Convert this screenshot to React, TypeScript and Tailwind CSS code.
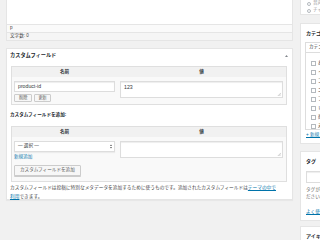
function ResizeHandle() {
  return (
    <svg className="absolute right-[1px] bottom-[1px]" width="4" height="4" viewBox="0 0 4 4">
      <path d="M0.8 4L4 0.8M2.4 4L4 2.4" stroke="#9a9a9a" strokeWidth="0.5" />
    </svg>
  );
}

function Textarea({ value }: { value?: string }) {
  return (
    <div className="relative h-[17px] border border-[#ddd] bg-white shadow-[inset_0_1px_1px_rgba(0,0,0,0.07)] pl-[3px] pt-[3px] text-[5.2px] text-[#32373c]">
      {value}
      <ResizeHandle />
    </div>
  );
}

function Checkbox() {
  return <span className="block w-[5px] h-[5px] shrink-0 border border-[#b4b9be] bg-white" />;
}

function SideBox({ title, className, children }: { title: string; className?: string; children?: React.ReactNode }) {
  return (
    <div className={`bg-white border border-[#e5e5e5] ${className ?? ""}`}>
      <div className="h-[18px] flex items-center pl-[5px] font-bold text-[5px] text-[#23282d] whitespace-nowrap">
        {title}
      </div>
      {children}
    </div>
  );
}

export default function App() {
  return (
    <div className="w-[320px] h-[240px] overflow-hidden bg-[#f1f1f1] flex pl-[6px] font-['Liberation_Sans','Noto_Sans_CJK_JP',sans-serif] text-[4.6px] text-[#444] leading-none">
      {/* main column */}
      <main className="w-[287px] shrink-0 flex flex-col">
        <div className="h-[24px] bg-white border-x border-[#e5e5e5]" />
        <div className="h-[9px] bg-[#fafafa] border border-[#e5e5e5] flex items-center pl-[3px] text-[4.6px]">p</div>
        <div className="h-[8px] bg-[#f5f5f5] border-x border-b border-[#e5e5e5] flex items-center pl-[3px] text-[4.6px]">
          文字数: 0
        </div>

        <section className="mt-[7px] h-[152px] bg-white border border-[#e5e5e5] shadow-[0_1px_1px_rgba(0,0,0,0.04)]">
          <div className="h-[14px] flex items-center justify-between pl-[3px] pr-[4px]">
            <span className="font-bold text-[5.2px] text-[#23282d]">カスタムフィールド</span>
            <svg width="3" height="2" viewBox="0 0 3 2">
              <path d="M0 2L1.5 0L3 2Z" fill="#82878c" />
            </svg>
          </div>

          <div className="mt-[3px] ml-[4px] mr-[5px]">
            {/* existing fields */}
            <div className="border border-[#dfdfdf] bg-[#f9f9f9]">
              <div className="grid grid-cols-[105px_1fr] h-[10px] bg-[#f1f1f1] items-center text-center font-bold text-[4.6px] text-[#32373c]">
                <span>名前</span>
                <span>値</span>
              </div>
              <div className="grid grid-cols-[105px_1fr]">
                <div className="pl-[2px] pr-[2px] pt-[4px] pb-[2px] flex flex-col">
                  <div className="h-[11px] border border-[#ddd] bg-white shadow-[inset_0_1px_1px_rgba(0,0,0,0.07)] flex items-center pl-[3px] text-[5.2px] text-[#32373c]">
                    product-id
                  </div>
                  <div className="mt-[2px] flex gap-[2px]">
                    <span className="h-[8px] px-[4px] flex items-center border border-[#ccc] bg-[#f7f7f7] rounded-[1px] text-[4.2px] text-[#555]">削除</span>
                    <span className="h-[8px] px-[3px] flex items-center border border-[#ccc] bg-[#f7f7f7] rounded-[1px] text-[4.2px] text-[#555]">更新</span>
                  </div>
                </div>
                <div className="px-[3px] pt-[4px]">
                  <Textarea value="123" />
                </div>
              </div>
            </div>

            <div className="h-[21px] flex items-center -ml-[1px] font-bold text-[4.6px] text-[#23282d]">
              カスタムフィールドを追加:
            </div>

            {/* new field */}
            <div className="border border-[#dfdfdf] bg-[#f9f9f9]">
              <div className="grid grid-cols-[105px_1fr] h-[10px] bg-[#f1f1f1] items-center text-center font-bold text-[4.6px] text-[#32373c]">
                <span>名前</span>
                <span>値</span>
              </div>
              <div className="grid grid-cols-[105px_1fr]">
                <div className="pl-[2px] pr-[2px] pt-[4px] pb-[5px] flex flex-col items-start">
                  <div className="w-full h-[11px] border border-[#ddd] bg-white shadow-[0_1px_1px_rgba(0,0,0,0.05)] flex items-center justify-between pl-[3px] pr-[2px] text-[4.6px] text-[#32373c]">
                    <span>— 選択 —</span>
                    <svg width="2" height="5" viewBox="0 0 2 5">
                      <path d="M0 2L1 0.5L2 2ZM0 3L1 4.5L2 3Z" fill="#555" />
                    </svg>
                  </div>
                  <span className="mt-[1px] h-[8px] flex items-center text-[4.6px] text-[#0073aa]">新規追加</span>
                  <span className="mt-[4px] h-[11px] px-[5px] flex items-center border border-[#ccc] bg-[#f7f7f7] rounded-[1px] shadow-[0_1px_0_#ccc] text-[4.6px] text-[#555]">
                    カスタムフィールドを追加
                  </span>
                </div>
                <div className="px-[3px] pt-[4px]">
                  <Textarea />
                </div>
              </div>
            </div>

            <p className="mt-[1px] -ml-[1px] text-[4.7px] leading-[9px] whitespace-nowrap text-[#444]">
              カスタムフィールドは投稿に特別なメタデータを追加するために使うものです。追加されたカスタムフィールドは
              <span className="text-[#0073aa] underline">テーマの中で</span>
              <br />
              <span className="text-[#0073aa] underline">利用</span>できます。
            </p>
          </div>
        </section>
      </main>

      {/* sidebar */}
      <aside className="ml-[7px] w-[103px] shrink-0 flex flex-col">
        <div className="h-[16px] bg-white border-x border-b border-[#e5e5e5] pl-[6px]">
          {["音声", "チャット"].map((l) => (
            <div key={l} className="h-[7px] flex items-center gap-[2px] text-[4.6px] text-[#999]">
              <span className="block w-[4px] h-[4px] rounded-full border border-[#b4b9be] bg-white" />
              <span>{l}</span>
            </div>
          ))}
        </div>

        <SideBox title="カテゴリー" className="mt-[8px] pb-[4px]">
          <div className="pl-[4px] flex flex-col items-start">
            <div className="flex h-[10px] items-center px-[3px] border border-b-0 border-[#ddd] bg-white text-[4.6px] text-[#32373c]">
              カテゴリー一覧
            </div>
            <div className="w-full h-[78px] border border-[#ddd] pt-[6px] pl-[5px]">
              {["お知らせ", "イベント", "コラム", "ニュース", "ブログ", "レシピ", "商品", "未分類"].map((c) => (
                <div key={c} className="h-[9px] flex items-center gap-[2px] text-[4.6px] text-[#444] whitespace-nowrap">
                  <Checkbox />
                  <span>{c}</span>
                </div>
              ))}
            </div>
          </div>
          <div className="mt-[1px] h-[8px] pl-[5px] flex items-center text-[4.6px] text-[#0073aa] underline whitespace-nowrap">
            + 新規カテゴリーを追加
          </div>
        </SideBox>

        <SideBox title="タグ" className="mt-[7px] pb-[4px]">
          <div className="mt-[1px] pl-[5px] flex gap-[2px]">
            <div className="w-[60px] h-[12px] border border-[#ddd] bg-white shadow-[inset_0_1px_1px_rgba(0,0,0,0.07)]" />
            <span className="h-[12px] px-[4px] flex items-center border border-[#ccc] bg-[#f7f7f7] text-[4.6px]">追加</span>
          </div>
          <p className="mt-[3px] pl-[5px] text-[4.6px] leading-[7px] text-[#666] whitespace-nowrap">
            タグが複数ある場合はコンマで区切ってく
            <br />
            ださい。
          </p>
          <div className="mt-[8px] h-[8px] pl-[5px] flex items-center text-[4.6px] text-[#0073aa] underline whitespace-nowrap">
            よく使われているタグから選択
          </div>
        </SideBox>

        <SideBox title="アイキャッチ画像" className="mt-[5px] h-[40px]" />
      </aside>
    </div>
  );
}
